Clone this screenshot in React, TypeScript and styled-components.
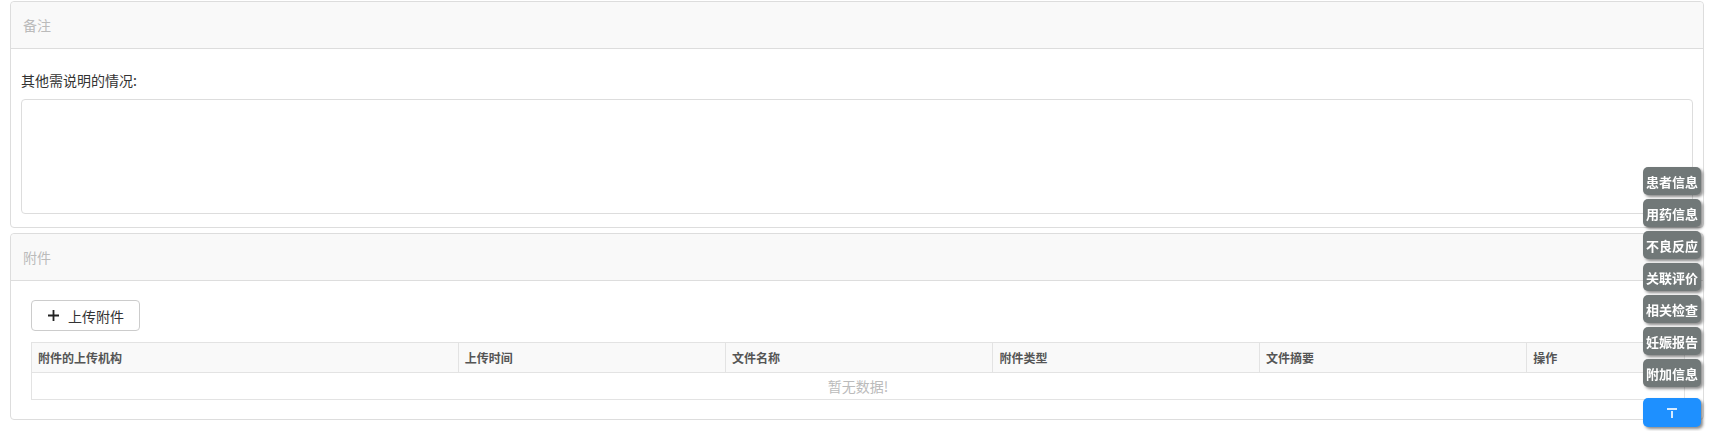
import React from 'react';
import styled, { createGlobalStyle } from 'styled-components';

const GlobalStyle = createGlobalStyle`
  html, body {
    margin: 0;
    padding: 0;
    background: #fff;
    font-family: "Noto Sans CJK SC", "Liberation Sans", sans-serif;
    font-size: 13px;
    color: #333;
  }
`;

const Page = styled.div`
  padding: 1px 7px 0 10px;
`;

const Panel = styled.section`
  border: 1px solid #ddd;
  border-radius: 4px;
  background: #fff;
  margin-bottom: 5px;
`;

const PanelHeader = styled.div`
  height: 46px;
  display: flex;
  align-items: center;
  padding: 0 12px;
  background: #f9f9f9;
  border-bottom: 1px solid #ddd;
  border-radius: 4px 4px 0 0;
  color: #bbb;
  font-size: 14px;
`;

const PanelBody = styled.div<{ $pad: string }>`
  padding: ${(p) => p.$pad};
`;

const Label = styled.div`
  line-height: 20px;
  font-size: 14px;
  color: #333;
  margin-bottom: 9px;
`;

const TextArea = styled.textarea`
  display: block;
  width: 100%;
  box-sizing: border-box;
  height: 115px;
  border: 1px solid #ddd;
  border-radius: 4px;
  resize: none;
  outline: none;
`;

const UploadButton = styled.button`
  display: inline-flex;
  align-items: center;
  gap: 9px;
  height: 31px;
  width: 109px;
  box-sizing: border-box;
  padding: 0 0 0 16px;
  border: 1px solid #ccc;
  border-radius: 4px;
  background: #fff;
  font-family: inherit;
  font-size: 14px;
  color: #333;
  margin-bottom: 11px;
`;

const Table = styled.table`
  width: 100%;
  border-collapse: collapse;
  table-layout: fixed;
  border: 1px solid #e3e3e3;
`;

const Th = styled.th<{ $w: string }>`
  width: ${(p) => p.$w};
  height: 29px;
  padding: 0 6px;
  text-align: left;
  background: #f9f9f9;
  border: 1px solid #e3e3e3;
  font-size: 12px;
  font-weight: bold;
  color: #555;
`;

const EmptyCell = styled.td`
  height: 24px;
  text-align: center;
  color: #bbb;
  font-size: 14px;
  border-bottom: 1px solid #e3e3e3;
`;

const SideNav = styled.nav`
  position: fixed;
  right: 10px;
  top: 167px;
  width: 58px;
  display: flex;
  flex-direction: column;
  gap: 4px;
`;

const NavItem = styled.div`
  height: 28px;
  display: flex;
  align-items: center;
  justify-content: center;
  background: #717878;
  color: #fff;
  border-radius: 5px;
  font-size: 13px;
  font-weight: bold;
  box-shadow: 2px 2px 3px rgba(0, 0, 0, 0.45);
`;

const TopButton = styled.div`
  margin-top: 7px;
  height: 29px;
  display: flex;
  align-items: center;
  justify-content: center;
  background: #1e90ff;
  border-radius: 5px;
  box-shadow: 2px 2px 3px rgba(0, 0, 0, 0.45);
`;

const ScrollStrip = styled.div`
  position: fixed;
  right: 0;
  top: 315px;
  width: 8px;
  height: 103px;
  background: #dcdde4;
  z-index: -1;
`;

const navItems = ['患者信息', '用药信息', '不良反应', '关联评价', '相关检查', '妊娠报告', '附加信息'];

const columns: [string, string][] = [
  ['附件的上传机构', '26.25%'],
  ['上传时间', '16.15%'],
  ['文件名称', '16.15%'],
  ['附件类型', '16.1%'],
  ['文件摘要', '16.15%'],
  ['操作', '9.2%'],
];

export default function App() {
  return (
    <>
      <GlobalStyle />
      <Page>
        <Panel>
          <PanelHeader>备注</PanelHeader>
          <PanelBody $pad="21px 10px 13px 10px">
            <Label>其他需说明的情况:</Label>
            <TextArea />
          </PanelBody>
        </Panel>
        <Panel>
          <PanelHeader>附件</PanelHeader>
          <PanelBody $pad="19px 18px 19px 20px">
            <UploadButton>
              <svg width="11" height="11" viewBox="0 0 11 11">
                <path d="M5.5 0v11M0 5.5h11" stroke="#222" strokeWidth="1.8" />
              </svg>
              上传附件
            </UploadButton>
            <Table>
              <thead>
                <tr>
                  {columns.map(([name, w]) => (
                    <Th key={name} $w={w}>
                      {name}
                    </Th>
                  ))}
                </tr>
              </thead>
              <tbody>
                <tr>
                  <EmptyCell colSpan={6}>暂无数据!</EmptyCell>
                </tr>
              </tbody>
            </Table>
          </PanelBody>
        </Panel>
      </Page>
      <ScrollStrip />
      <SideNav>
        {navItems.map((n) => (
          <NavItem key={n}>{n}</NavItem>
        ))}
        <TopButton>
          <svg width="10" height="10" viewBox="0 0 10 10">
            <path d="M0 1h10M5 3v7" stroke="#d6ebff" strokeWidth="2" />
          </svg>
        </TopButton>
      </SideNav>
    </>
  );
}
